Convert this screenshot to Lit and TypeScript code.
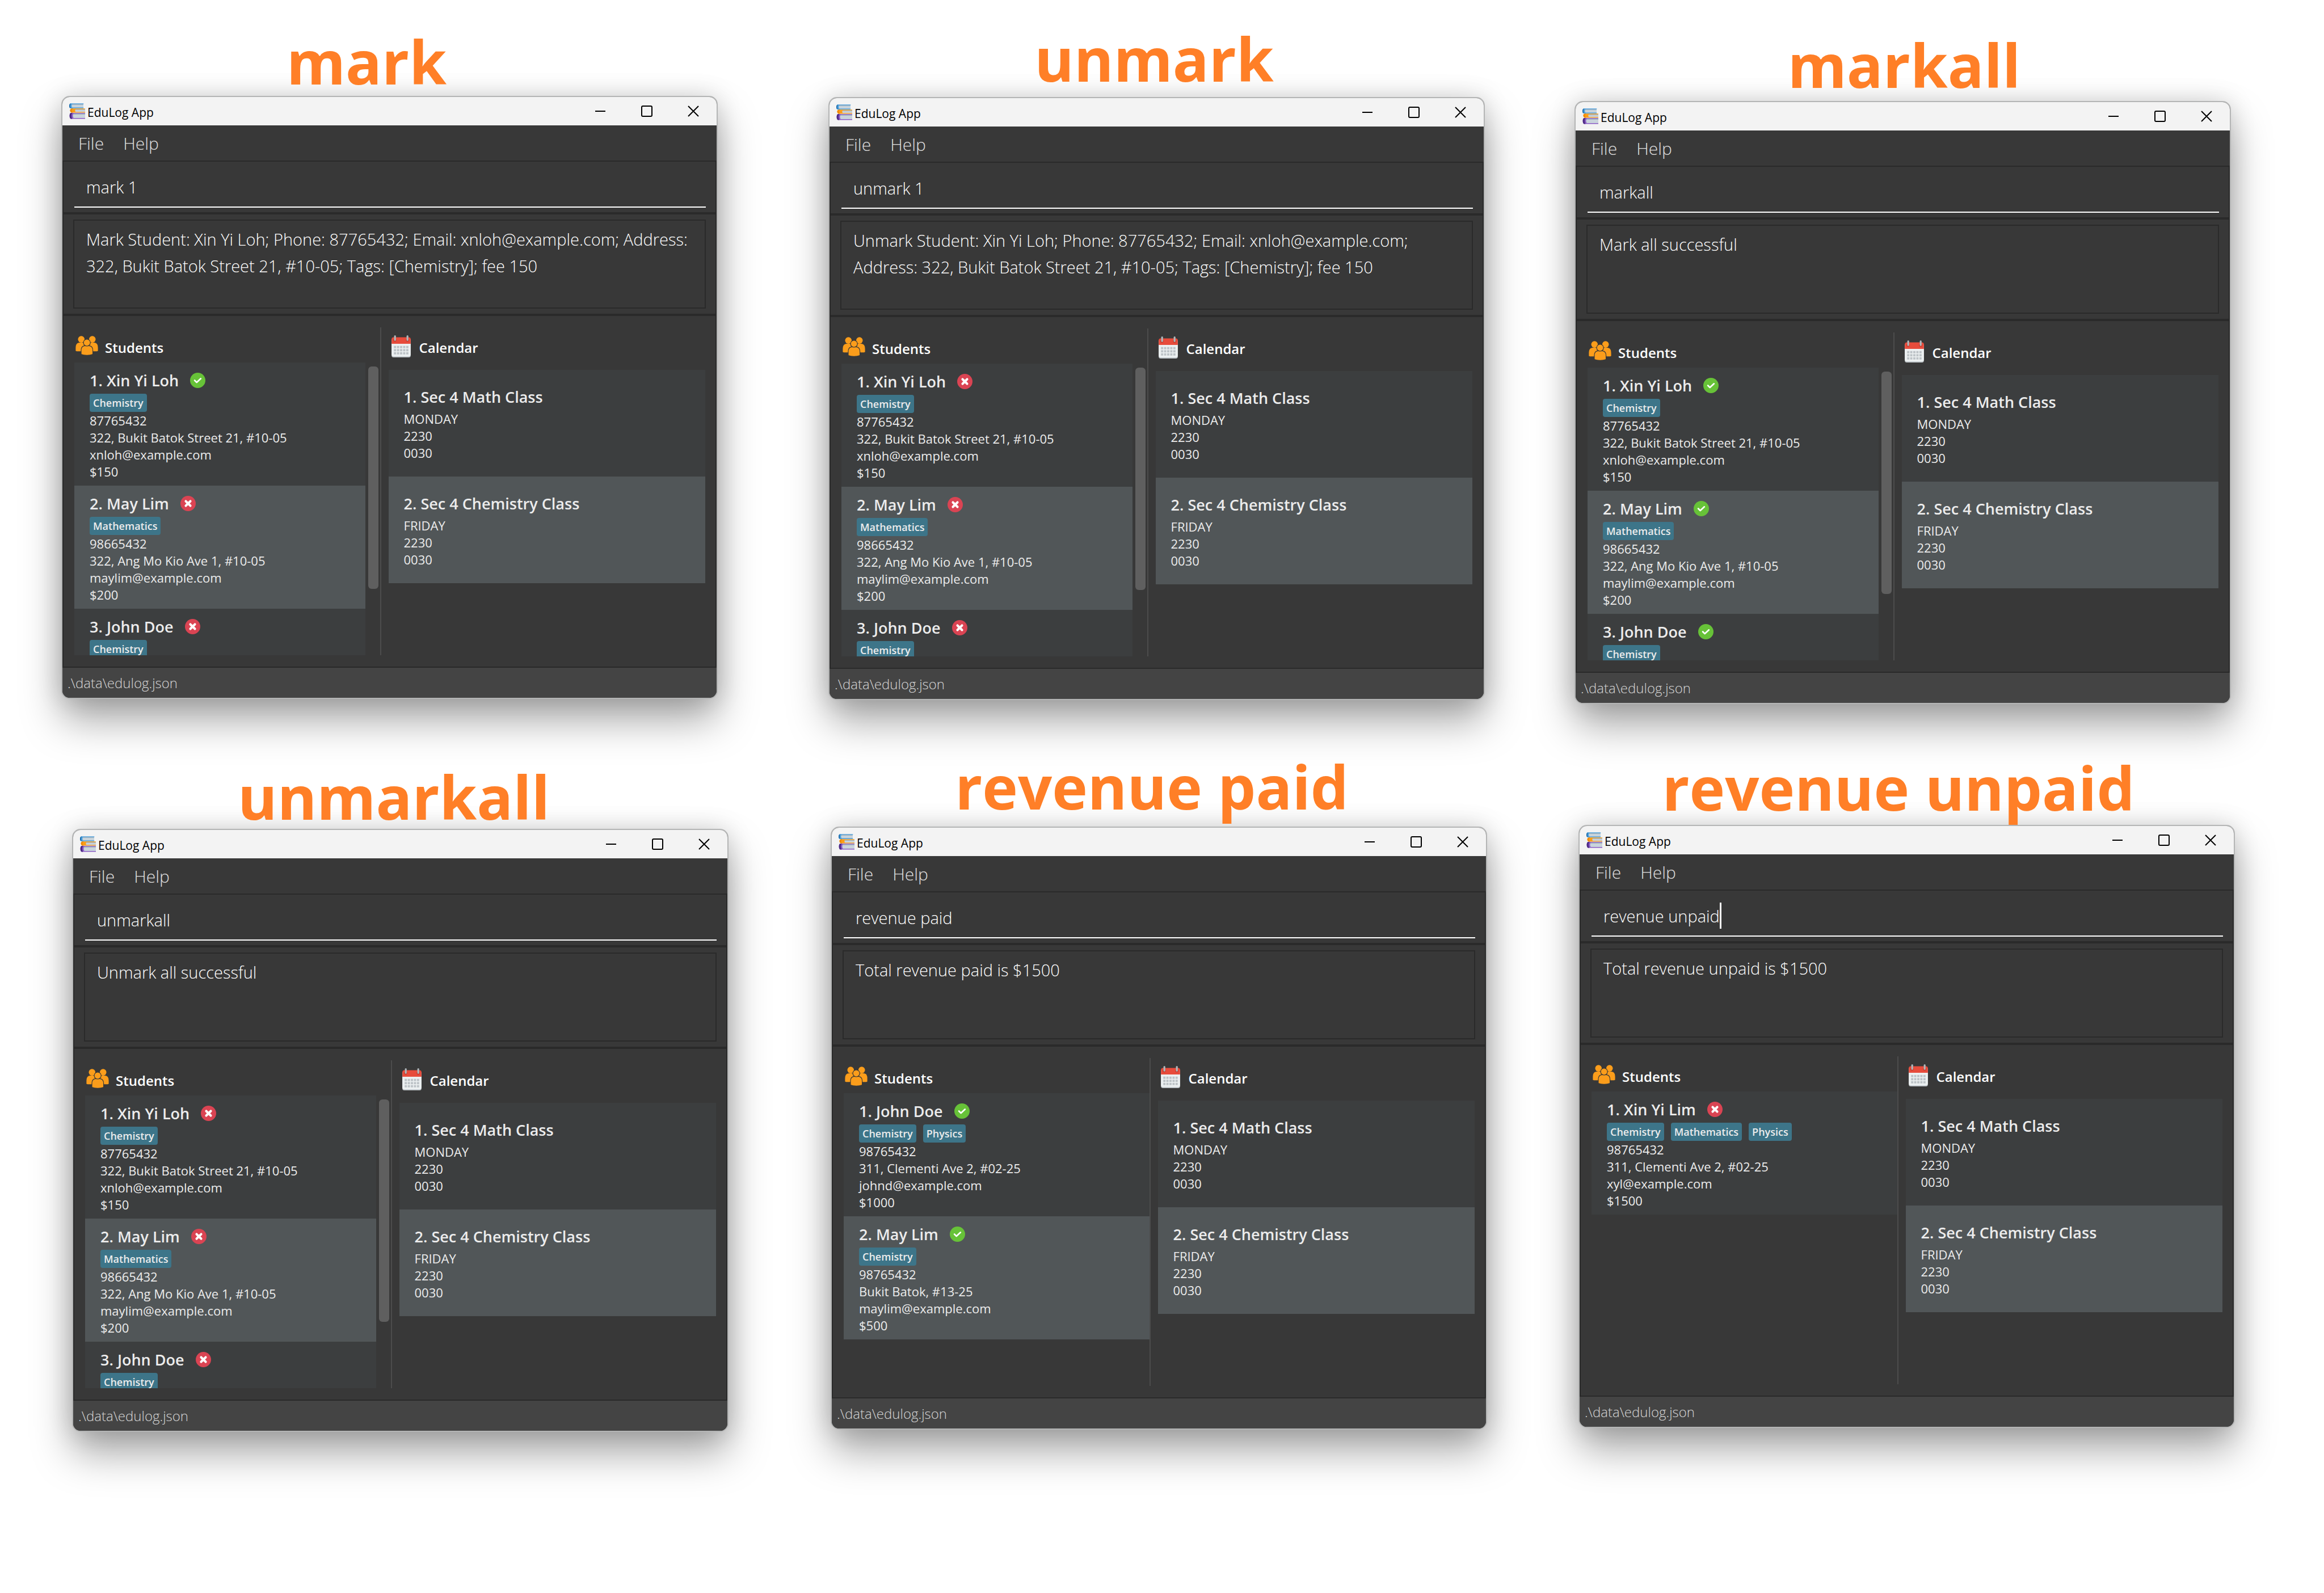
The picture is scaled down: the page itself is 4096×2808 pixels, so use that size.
import { LitElement, html, svg, css, nothing } from "lit";
import { customElement, property } from "lit/decorators.js";
import { styleMap } from "lit/directives/style-map.js";

interface Student {
  name: string;
  tags: string[];
  phone: string;
  address: string;
  email: string;
  fee: string;
  paid: boolean;
}

interface Lesson {
  name: string;
  day: string;
  start: string;
  end: string;
}

interface Scene {
  title: string;
  titleX: number;
  titleY: number;
  x: number;
  y: number;
  command: string;
  result: string;
  typing?: boolean;
  scrolls?: boolean;
  students: Student[];
}

const CANVAS_WIDTH = 4096;
const CANVAS_HEIGHT = 2808;

const lessons: Lesson[] = [
  { name: "Sec 4 Math Class", day: "MONDAY", start: "2230", end: "0030" },
  { name: "Sec 4 Chemistry Class", day: "FRIDAY", start: "2230", end: "0030" },
];

const roster = (paid: boolean[]): Student[] => [
  { name: "Xin Yi Loh", tags: ["Chemistry"], phone: "87765432", address: "322, Bukit Batok Street 21, #10-05", email: "xnloh@example.com", fee: "$150", paid: paid[0] },
  { name: "May Lim", tags: ["Mathematics"], phone: "98665432", address: "322, Ang Mo Kio Ave 1, #10-05", email: "maylim@example.com", fee: "$200", paid: paid[1] },
  { name: "John Doe", tags: ["Chemistry"], phone: "", address: "", email: "", fee: "", paid: paid[2] },
];

const scenes: Scene[] = [
  {
    title: "mark", titleX: 646, titleY: 46, x: 108, y: 169, command: "mark 1", scrolls: true,
    result: "Mark Student: Xin Yi Loh; Phone: 87765432; Email: xnloh@example.com; Address: 322, Bukit Batok Street 21, #10-05; Tags: [Chemistry]; fee 150",
    students: roster([true, false, false]),
  },
  {
    title: "unmark", titleX: 2034, titleY: 41, x: 1460, y: 171, command: "unmark 1", scrolls: true,
    result: "Unmark Student: Xin Yi Loh; Phone: 87765432; Email: xnloh@example.com; Address: 322, Bukit Batok Street 21, #10-05; Tags: [Chemistry]; fee 150",
    students: roster([false, false, false]),
  },
  {
    title: "markall", titleX: 3356, titleY: 52, x: 2775, y: 178, command: "markall", scrolls: true,
    result: "Mark all successful",
    students: roster([true, true, true]),
  },
  {
    title: "unmarkall", titleX: 694, titleY: 1342, x: 127, y: 1461, command: "unmarkall", scrolls: true,
    result: "Unmark all successful",
    students: roster([false, false, false]),
  },
  {
    title: "revenue paid", titleX: 2030, titleY: 1324, x: 1464, y: 1457, command: "revenue paid",
    result: "Total revenue paid is $1500",
    students: [
      { name: "John Doe", tags: ["Chemistry", "Physics"], phone: "98765432", address: "311, Clementi Ave 2, #02-25", email: "johnd@example.com", fee: "$1000", paid: true },
      { name: "May Lim", tags: ["Chemistry"], phone: "98765432", address: "Bukit Batok, #13-25", email: "maylim@example.com", fee: "$500", paid: true },
    ],
  },
  {
    title: "revenue unpaid", titleX: 3346, titleY: 1326, x: 2782, y: 1454, command: "revenue unpaid", typing: true,
    result: "Total revenue unpaid is $1500",
    students: [
      { name: "Xin Yi Lim", tags: ["Chemistry", "Mathematics", "Physics"], phone: "98765432", address: "311, Clementi Ave 2, #02-25", email: "xyl@example.com", fee: "$1500", paid: false },
    ],
  },
];

const booksIcon = html`<svg class="books" viewBox="22 9 92 91" aria-hidden="true">
  <path d="M30 9H105V14H102V33H105V38H30Q22 36 22 24Q22 11 30 9Z" fill="#4c9fdc" />
  <path d="M32 9Q22 11 22 24Q22 36 32 38Q28 32 28 24Q28 14 32 9Z" fill="#1d6cab" />
  <path d="M40 14H103V33H40Q36 31 36 24Q36 16 40 14Z" fill="#c9d4dc" />
  <path d="M40 14H103V18H38Z" fill="#9fb2c0" />
  <path d="M36 39H114V43H112V58H114V63H34Q27 60 27 51Q27 41 36 39Z" fill="#fb9d17" />
  <path d="M36 39Q27 41 27 51Q27 60 36 63H44Q37 58 37 51Q37 43 44 39Z" fill="#ee8a0a" />
  <path d="M60 44H114V59H60Q56 57 56 51Q56 46 60 44Z" fill="#c9d4dc" />
  <path d="M60 44H114V48H58Z" fill="#9fb2c0" />
  <path d="M32 64H114V70H112V93H114V99H32Q24 97 24 81Q24 66 32 64Z" fill="#8a5cc4" />
  <path d="M32 64Q24 66 24 81Q24 97 32 99H40Q35 92 35 81Q35 70 40 64Z" fill="#4d2a86" />
  <path d="M48 69H114V94H48Q43 91 43 81Q43 72 48 69Z" fill="#c9d4dc" />
  <path d="M48 69H114V74H45Z" fill="#9fb2c0" />
</svg>`;

const peopleIcon = html`<svg class="people" viewBox="26 35 137 117" aria-hidden="true">
  <g fill="#fb9d1b">
    <circle cx="61" cy="56" r="20" />
    <circle cx="128" cy="56" r="20" />
    <path d="M27 126V106Q27 78 48 76H74L82 94V129H44Q32 129 27 126Z" />
    <path d="M162 126V106Q162 78 141 76H115L107 94V129H145Q157 129 162 126Z" />
  </g>
  <g fill="#fb9d1b" stroke="#383838" stroke-width="4">
    <path d="M60 147V124Q60 97 82 95H108Q131 97 131 124V147Q117 153 95 153Q73 153 60 147Z" />
    <circle cx="95" cy="76" r="21" />
  </g>
</svg>`;

const calendarIcon = html`<svg class="cal" viewBox="0 0 38 44" aria-hidden="true">
  <path d="M0 8H38V40Q38 44 34 44H4Q0 44 0 40Z" fill="#bdc3c7" />
  <path d="M0 8H38V38Q38 42 34 42H4Q0 42 0 38Z" fill="#ecf0f1" />
  <path d="M0 17V8Q0 4 4 4H34Q38 4 38 8V17Z" fill="#e74c3c" />
  <circle cx="6.5" cy="9.5" r="3" fill="#c0392b" />
  <circle cx="31.5" cy="9.5" r="3" fill="#c0392b" />
  <rect x="5" y="0" width="3.6" height="11" rx="1.8" fill="#b0b7bb" />
  <rect x="29.8" y="0" width="3.6" height="11" rx="1.8" fill="#b0b7bb" />
  ${[0, 1, 2].map((r) => [0, 1, 2, 3, 4].map((c) => svg`<rect x=${4.6 + c * 6.1} y=${21.2 + r * 6.2} width="4.4" height="4.4" fill="#bdc3c7" />`))}
</svg>`;

const statusIcon = (paid: boolean) =>
  paid
    ? html`<svg class="status" viewBox="0 0 30 30" role="img" aria-label="Paid">
        <circle cx="15" cy="15" r="15" fill="#67c238" />
        <path d="M9 15L13 19L21 11.5" fill="none" stroke="#fff" stroke-width="3" stroke-linecap="round" stroke-linejoin="round" />
      </svg>`
    : html`<svg class="status" viewBox="0 0 30 30" role="img" aria-label="Unpaid">
        <circle cx="15" cy="15" r="15" fill="#da4453" />
        <path d="M10.5 10.5L19.5 19.5M19.5 10.5L10.5 19.5" fill="none" stroke="#fff" stroke-width="4.5" stroke-linecap="round" />
      </svg>`;

@customElement("edulog-window")
class EdulogWindow extends LitElement {
  @property({ attribute: false }) scene!: Scene;

  static styles = css`
    :host {
      display: block;
      color: #ececec;
      font-family: "Segoe UI", "Open Sans", "Noto Sans", sans-serif;
    }
    button,
    input,
    textarea {
      margin: 0;
      padding: 0;
      border: 0;
      outline: 0;
      background: none;
      color: inherit;
      font: inherit;
    }
    ul {
      margin: 0;
      padding: 0;
      list-style: none;
    }
    h2,
    h3,
    p {
      margin: 0;
    }
    svg {
      display: block;
      flex: none;
    }
    .window {
      border: 2px solid #b4b5b5;
      border-radius: 15px;
      overflow: hidden;
      background: #383838;
      box-shadow: 0 0 44px rgba(0, 0, 0, 0.15), 0 38px 70px rgba(0, 0, 0, 0.34);
    }
    .titlebar {
      display: flex;
      align-items: center;
      height: 50px;
      padding-left: 12px;
      background: #f3f3f3;
      color: #000;
    }
    .books {
      width: 28px;
      height: 28px;
    }
    .app-name {
      flex: 1;
      padding: 3px 0 0 4px;
      font-size: 21px;
      line-height: 28px;
    }
    .control {
      display: grid;
      place-items: center;
      width: 82px;
      height: 48px;
    }
    .control svg {
      width: 20px;
      height: 20px;
      fill: none;
      stroke: #000;
      stroke-width: 2;
    }
    .menubar {
      display: flex;
      gap: 34px;
      height: 62px;
      padding-left: 28px;
      color: #e0e0e0;
      font-size: 30px;
      font-weight: 300;
    }
    .pane {
      border: 2px solid #2a2a2a;
    }
    .command {
      padding: 25px 17px 8px 19px;
    }
    .field {
      display: flex;
      padding: 0 0 14px 21px;
      border-bottom: 2px solid #fff;
      color: #fff;
      font-size: 29px;
      font-weight: 300;
    }
    .field input {
      flex: 1;
      min-width: 0;
      height: 40px;
      line-height: 40px;
    }
    .field input.active {
      flex: none;
      field-sizing: content;
    }
    .caret {
      width: 3px;
      height: 46px;
      margin: -4px 0;
      background: #fff;
    }
    .result {
      padding: 9px 17px;
    }
    .result textarea {
      display: block;
      box-sizing: border-box;
      width: 100%;
      height: 157px;
      padding: 9px 15px 3px 21px;
      border: 2px solid #2a2a2a;
      overflow: hidden;
      resize: none;
      color: #fff;
      font-size: 29px;
      font-weight: 300;
      line-height: 47px;
    }
    .main {
      display: grid;
      grid-template-columns: minmax(0, 538fr) 2px minmax(0, 571fr);
      height: 578px;
      padding: 20px 18px 20px 19px;
    }
    .divider {
      background: #4c4c4c;
    }
    .column {
      display: flex;
      flex-direction: column;
      min-height: 0;
    }
    .heading {
      display: flex;
      gap: 12px;
      color: #fff;
      font-size: 24px;
      line-height: 33px;
    }
    .heading h2 {
      padding-top: 19px;
      font: inherit;
      font-weight: 600;
    }
    .students .heading {
      height: 62px;
      padding-left: 2px;
    }
    .calendar {
      padding-left: 13px;
    }
    .calendar .heading {
      gap: 15px;
      height: 75px;
      padding-left: 5px;
    }
    .people {
      width: 40px;
      height: 34px;
      padding-top: 15px;
    }
    .cal {
      width: 34px;
      height: 39px;
      padding-top: 14px;
    }
    .list {
      display: flex;
      flex: 1;
      gap: 5px;
      min-height: 0;
    }
    .rows {
      flex: 1;
      overflow: hidden;
    }
    .scrollbar {
      width: 18px;
      margin: 7px 3px 0 0;
    }
    .thumb {
      height: 77%;
      border-radius: 6px;
      background: #5f5f5f;
    }
    .card {
      box-sizing: border-box;
      background: #3c3e3f;
      font-size: 22px;
      line-height: 30px;
    }
    .card:nth-child(even) {
      background: #515658;
    }
    .student {
      height: 217px;
      padding: 13px 27px 0;
    }
    .lesson {
      height: 188px;
      padding: 29px 27px 0;
    }
    .card h3 {
      font-size: 27px;
      font-weight: 600;
      line-height: 37px;
    }
    .name {
      display: flex;
      align-items: center;
      gap: 20px;
    }
    .status {
      width: 27px;
      height: 27px;
    }
    .tags {
      display: flex;
      gap: 12px;
      padding-top: 5px;
    }
    .tag {
      padding: 0 6px;
      border-radius: 4px;
      background: #3d7589;
      font-size: 18px;
      font-weight: 600;
      line-height: 32px;
    }
    .lesson h3 {
      padding-bottom: 5px;
    }
    .statusbar {
      height: 53px;
      padding: 10px 9px 0;
      box-sizing: border-box;
      background: #444;
      color: #d6d6d6;
      font-size: 24px;
      font-weight: 300;
      line-height: 34px;
    }
  `;

  private student(s: Student, i: number) {
    return html`<li class="card student">
      <div class="name"><h3>${i + 1}. ${s.name}</h3>${statusIcon(s.paid)}</div>
      <div class="tags">${s.tags.map((t) => html`<span class="tag">${t}</span>`)}</div>
      ${[s.phone, s.address, s.email, s.fee].map((v) => (v ? html`<p>${v}</p>` : nothing))}
    </li>`;
  }

  render() {
    const s = this.scene;
    return html`<section class="window" aria-label=${s.title}>
      <header class="titlebar">
        ${booksIcon}
        <span class="app-name">EduLog App</span>
        <button class="control" aria-label="Minimize"><svg viewBox="0 0 20 20"><path d="M1 10H19" /></svg></button>
        <button class="control" aria-label="Maximize"><svg viewBox="0 0 20 20"><rect x="1" y="1" width="18" height="18" rx="2" /></svg></button>
        <button class="control" aria-label="Close"><svg viewBox="0 0 20 20"><path d="M1 1L19 19M19 1L1 19" /></svg></button>
      </header>
      <nav class="menubar"><button>File</button><button>Help</button></nav>
      <div class="pane command">
        <div class="field">
          <input class=${s.typing ? "active" : "idle"} type="text" aria-label="Command" .value=${s.command} />
          ${s.typing ? html`<span class="caret"></span>` : nothing}
        </div>
      </div>
      <div class="pane result">
        <textarea readonly aria-label="Result" .value=${s.result}></textarea>
      </div>
      <div class="pane main">
        <div class="column students">
          <div class="heading">${peopleIcon}<h2>Students</h2></div>
          <div class="list">
            <ul class="rows">${s.students.map((x, i) => this.student(x, i))}</ul>
            ${s.scrolls ? html`<div class="scrollbar"><div class="thumb"></div></div>` : nothing}
          </div>
        </div>
        <div class="divider"></div>
        <div class="column calendar">
          <div class="heading">${calendarIcon}<h2>Calendar</h2></div>
          <ul>
            ${lessons.map((l, i) => html`<li class="card lesson">
              <h3>${i + 1}. ${l.name}</h3>
              <p>${l.day}</p><p>${l.start}</p><p>${l.end}</p>
            </li>`)}
          </ul>
        </div>
      </div>
      <footer class="statusbar">.\\data\\edulog.json</footer>
    </section>`;
  }
}

@customElement("app-root")
class AppRoot extends LitElement {
  static styles = css`
    :host {
      display: block;
      background: #fff;
    }
    .canvas {
      position: relative;
      width: 100%;
      aspect-ratio: 4096 / 2808;
      overflow: hidden;
    }
    .place {
      position: absolute;
      width: 28.25%;
    }
    .title {
      position: absolute;
      margin: 0;
      transform: translateX(-50%);
      color: #ff7f27;
      font-family: "Segoe UI", "Open Sans", "Noto Sans", sans-serif;
      font-size: 106px;
      font-weight: 700;
      line-height: 124px;
      white-space: nowrap;
    }
  `;

  private at(x: number, y: number) {
    return styleMap({ left: `${(x / CANVAS_WIDTH) * 100}%`, top: `${(y / CANVAS_HEIGHT) * 100}%` });
  }

  render() {
    return html`<main class="canvas">
      ${scenes.map((s) => html`
        <edulog-window class="place" style=${this.at(s.x, s.y)} .scene=${s}></edulog-window>
        <h1 class="title" style=${this.at(s.titleX, s.titleY)}>${s.title}</h1>`)}
    </main>`;
  }
}
